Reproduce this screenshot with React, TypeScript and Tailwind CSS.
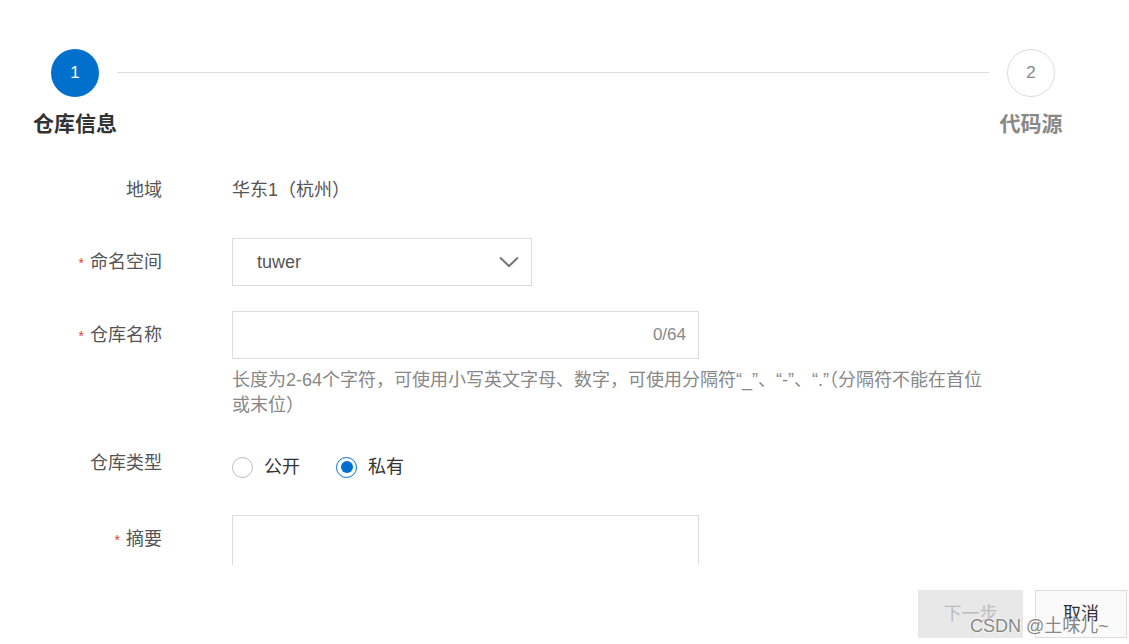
import React from "react";

const FONT = { fontFamily: '"Liberation Sans", "Noto Sans CJK SC", sans-serif' };

function Step({ num, label, active }: { num: number; label: string; active?: boolean }) {
  return (
    <div className="flex w-[84px] flex-col items-center">
      <div
        className={`flex h-12 w-12 items-center justify-center rounded-full text-[17px] ${
          active ? "bg-[#0070cc] text-white" : "border border-[#dcdcdc] bg-white text-[#888]"
        }`}
      >
        {num}
      </div>
      <div
        className={`mt-[13px] whitespace-nowrap text-[21px] font-bold leading-[28px] ${
          active ? "text-[#333]" : "text-[#888]"
        }`}
      >
        {label}
      </div>
    </div>
  );
}

function Label({ text, required }: { text: string; required?: boolean }) {
  return (
    <div className="w-[162px] shrink-0 text-right text-[18px] leading-[48px] text-[#555]">
      {required && <span className="mr-[6px] text-[14px] text-[#e23c39]">*</span>}
      {text}
    </div>
  );
}

function Radio({ label, checked }: { label: string; checked?: boolean }) {
  return (
    <label className="flex items-center gap-[11px]">
      <span
        className={`flex h-[21px] w-[21px] items-center justify-center rounded-full border bg-white ${
          checked ? "border-[#0070cc]" : "border-[#bbb]"
        }`}
      >
        {checked && <span className="h-[12px] w-[12px] rounded-full bg-[#0070cc]" />}
      </span>
      <span className="text-[18px] text-[#333]">{label}</span>
    </label>
  );
}

export default function App() {
  return (
    <div className="relative h-[644px] w-[1129px] overflow-hidden bg-white" style={FONT}>
      {/* Étapes */}
      <div className="flex pl-[33px] pr-[56px] pt-[49px]">
        <Step num={1} label="仓库信息" active />
        <div className="mt-[23px] h-px flex-1 bg-[#dcdcdc]" />
        <Step num={2} label="代码源" />
      </div>

      {/* Formulaire */}
      <div className="mt-[28px] h-[399px] overflow-hidden">
        <div className="mb-6 flex">
          <Label text="地域" />
          <div className="ml-[70px] text-[18px] leading-[48px] text-[#555]">华东1（杭州）</div>
        </div>

        <div className="mb-6 flex">
          <Label text="命名空间" required />
          <div className="ml-[70px] flex h-12 w-[300px] items-center justify-between border border-[#dcdcdc] pl-[24px] pr-[12px]">
            <span className="text-[18px] text-[#555]">tuwer</span>
            <svg width="20" height="12" viewBox="0 0 20 12" fill="none">
              <path d="M1 1.5L10 10L19 1.5" stroke="#777" strokeWidth="2" />
            </svg>
          </div>
        </div>

        <div className="mb-[25px] flex">
          <Label text="仓库名称" required />
          <div className="ml-[70px]">
            <div className="flex h-12 w-[467px] items-center justify-end border border-[#dcdcdc] pr-[12px]">
              <span className="text-[17px] text-[#888]">0/64</span>
            </div>
            <p className="mt-[9px] w-[760px] text-[18px] leading-[25px] text-[#888]">
              长度为2-64个字符，可使用小写英文字母、数字，可使用分隔符“_”、“-”、“.”（分隔符不能在首位或末位）
            </p>
          </div>
        </div>

        <div className="mb-6 flex">
          <div className="w-[162px] shrink-0 text-right text-[18px] leading-[48px] text-[#555]">
            <span className="relative top-[-4px]">仓库类型</span>
          </div>
          <div className="ml-[70px] flex h-12 items-center gap-[36px]">
            <Radio label="公开" />
            <Radio label="私有" checked />
          </div>
        </div>

        <div className="flex">
          <Label text="摘要" required />
          <div className="ml-[70px] h-[100px] w-[467px] border border-[#dcdcdc]" />
        </div>
      </div>

      {/* Actions */}
      <div className="mt-[25px] flex justify-end gap-3 pr-[2px]">
        <button className="h-12 w-[105px] bg-[#e8e8e8] text-[18px] text-[#bbb]">下一步</button>
        <button className="h-12 w-[92px] border border-[#dcdcdc] bg-[#fafafa] text-[18px] text-[#333]">
          取消
        </button>
      </div>

      <div
        className="absolute left-[970px] top-[613px] whitespace-nowrap text-[18px] text-[#888]"
        style={{ textShadow: "0 0 2px #fff, 0 0 2px #fff" }}
      >
        CSDN @土味儿~
      </div>
    </div>
  );
}
